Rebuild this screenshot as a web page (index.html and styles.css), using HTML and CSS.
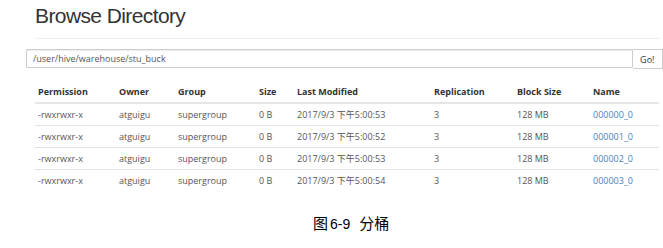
FILE: index.html
```html
<!DOCTYPE html>
<html lang="zh-CN">
<head>
    <meta charset="UTF-8">
    <title>Browse Directory</title>
    <link rel="stylesheet" href="styles.css">
</head>
<body>
    <div class="page">
        <div class="page-header">
            <h1>Browse Directory</h1>
        </div>

        <form class="path-form">
            <input type="text" class="path-input" value="/user/hive/warehouse/stu_buck">
            <button type="button" class="go-btn">Go!</button>
        </form>

        <table class="listing">
            <thead>
                <tr>
                    <th class="c-perm">Permission</th>
                    <th class="c-owner">Owner</th>
                    <th class="c-group">Group</th>
                    <th class="c-size">Size</th>
                    <th class="c-mod">Last Modified</th>
                    <th class="c-rep">Replication</th>
                    <th class="c-block">Block Size</th>
                    <th class="c-name">Name</th>
                </tr>
            </thead>
            <tbody>
                <tr>
                    <td>-rwxrwxr-x</td><td>atguigu</td><td>supergroup</td><td>0 B</td>
                    <td>2017/9/3 下午5:00:53</td><td>3</td><td>128 MB</td>
                    <td><a href="#">000000_0</a></td>
                </tr>
                <tr>
                    <td>-rwxrwxr-x</td><td>atguigu</td><td>supergroup</td><td>0 B</td>
                    <td>2017/9/3 下午5:00:52</td><td>3</td><td>128 MB</td>
                    <td><a href="#">000001_0</a></td>
                </tr>
                <tr>
                    <td>-rwxrwxr-x</td><td>atguigu</td><td>supergroup</td><td>0 B</td>
                    <td>2017/9/3 下午5:00:53</td><td>3</td><td>128 MB</td>
                    <td><a href="#">000002_0</a></td>
                </tr>
                <tr>
                    <td>-rwxrwxr-x</td><td>atguigu</td><td>supergroup</td><td>0 B</td>
                    <td>2017/9/3 下午5:00:54</td><td>3</td><td>128 MB</td>
                    <td><a href="#">000003_0</a></td>
                </tr>
            </tbody>
        </table>
    </div>

    <p class="caption">图<span class="num">6-9</span>分桶</p>
</body>
</html>
```

FILE: styles.css
```css
/* Reset */
* {
    margin: 0;
    padding: 0;
    box-sizing: border-box;
}

body {
    font-family: 'Open Sans', 'Noto Sans CJK SC', sans-serif;
    background: #fff;
    color: #333;
    width: 663px;
    height: 248px;
    overflow: hidden;
}

/* Header */
.page-header {
    margin-left: 35px;
    margin-right: 3px;
    height: 39px;
    border-bottom: 1px solid #eee;
}

.page-header h1 {
    font-family: 'Liberation Sans', Arial, sans-serif;
    font-weight: normal;
    font-size: 21px;
    letter-spacing: -0.6px;
    line-height: 21px;
    padding-top: 5px;
    color: #333;
}

/* Path form */
.path-form {
    display: flex;
    margin-top: 10px;
    margin-left: 26px;
    height: 20px;
}

.path-input {
    width: 610px;
    height: 19px;
    border: 1px solid #ccc;
    border-radius: 1px;
    box-shadow: inset 0 1px 1px rgba(0, 0, 0, 0.075);
    padding: 0 6px;
    font-family: 'Open Sans', sans-serif;
    font-size: 9px;
    color: #555;
    outline: none;
}

.go-btn {
    width: 30px;
    height: 20px;
    border: 1px solid #ccc;
    border-left: none;
    background: #fff;
    font-family: 'Open Sans', sans-serif;
    font-size: 9px;
    color: #333;
    text-align: left;
    padding-left: 7px;
}

/* Listing table */
.listing {
    margin-top: 12px;
    margin-left: 35px;
    width: 624px;
    border-collapse: collapse;
    font-size: 9px;
}

.listing th {
    font-weight: 700;
    text-align: left;
    height: 22px;
    padding: 0 3px;
    border-bottom: 2px solid #e6e6e6;
    color: #333;
}

.listing td {
    height: 22px;
    padding: 0 3px;
    border-top: 1px solid #e2e2e2;
    color: #555;
}

.listing tbody tr:first-child td {
    border-top: none;
}

.c-perm { width: 81px; }
.c-owner { width: 59px; }
.c-group { width: 81px; }
.c-size { width: 38px; }
.c-mod { width: 137px; }
.c-rep { width: 83px; }
.c-block { width: 76px; }

.listing a {
    color: #4a7fc1;
    text-decoration: none;
}

/* Figure caption */
.caption {
    margin-top: 22px;
    padding-left: 313px;
    font-family: 'Noto Sans CJK SC', sans-serif;
    font-size: 15px;
    line-height: 20px;
    color: #000;
}

.caption .num {
    font-family: 'Liberation Sans', Arial, sans-serif;
    font-size: 14px;
    margin: 0 9px 0 2px;
}
```
